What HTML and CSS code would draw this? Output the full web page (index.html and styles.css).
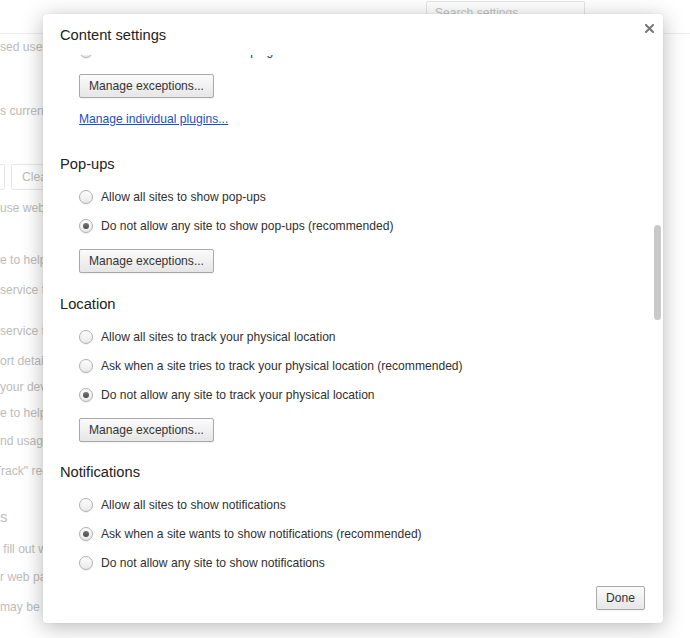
FILE: index.html
```html
<!DOCTYPE html>
<html lang="en">
<head>
    <meta charset="UTF-8">
    <meta name="viewport" content="width=device-width, initial-scale=1.0">
    <title>Content settings</title>
    <link rel="stylesheet" href="styles.css">
</head>
<body>
    <div class="backdrop">
        <div class="bg-header">
            <div class="bg-search">Search settings</div>
        </div>
        <div class="bg-line m5">sed users to manage this device</div>
        <div class="bg-line m48">s currently the default browser</div>
        <div class="bg-buttons m45">
            <span class="bg-btn first">Content settings...</span>
            <span class="bg-btn">Clear browsing data...</span>
        </div>
        <div class="bg-line m10">use web services to help</div>
        <div class="bg-line m36">e to help resolve navigation errors</div>
        <div class="bg-line m14">service to help complete searches</div>
        <div class="bg-line m25">service to help load pages</div>
        <div class="bg-line m14">ort details of possible security incidents</div>
        <div class="bg-line m10">your device from dangerous sites</div>
        <div class="bg-line m10">e to help resolve spelling errors</div>
        <div class="bg-line m12">nd usage statistics and crash reports</div>
        <div class="bg-line m14 clip">Track" request with your browsing traffic</div>
        <div class="bg-heading m28">s</div>
        <div class="bg-line m14">&nbsp;fill out web forms in a single click</div>
        <div class="bg-line m12">r web passwords</div>
        <div class="bg-line m14">may be stored here</div>
    </div>

    <div class="dialog">
        <div class="dialog-title">Content settings</div>
        <button class="close" aria-label="Close">
            <svg width="9" height="9" viewBox="0 0 9 9">
                <path d="M1 1 L8 8 M8 1 L1 8" stroke="#777" stroke-width="2" stroke-linecap="square" fill="none"/>
            </svg>
        </button>

        <div class="dialog-body">
            <div class="scroller">
                <div class="option"><span class="radio"></span>Let me choose when to run plugin content</div>
                <button class="btn indent">Manage exceptions...</button>
                <a class="link" href="#">Manage individual plugins...</a>

                <section class="group first">
                    <h3>Pop-ups</h3>
                    <div class="options">
                        <div class="option"><span class="radio"></span>Allow all sites to show pop-ups</div>
                        <div class="option"><span class="radio checked"></span>Do not allow any site to show pop-ups (recommended)</div>
                    </div>
                    <button class="btn indent">Manage exceptions...</button>
                </section>

                <section class="group">
                    <h3>Location</h3>
                    <div class="options">
                        <div class="option"><span class="radio"></span>Allow all sites to track your physical location</div>
                        <div class="option"><span class="radio"></span>Ask when a site tries to track your physical location (recommended)</div>
                        <div class="option"><span class="radio checked"></span>Do not allow any site to track your physical location</div>
                    </div>
                    <button class="btn indent">Manage exceptions...</button>
                </section>

                <section class="group">
                    <h3>Notifications</h3>
                    <div class="options">
                        <div class="option"><span class="radio"></span>Allow all sites to show notifications</div>
                        <div class="option"><span class="radio checked"></span>Ask when a site wants to show notifications (recommended)</div>
                        <div class="option"><span class="radio"></span>Do not allow any site to show notifications</div>
                    </div>
                    <button class="btn indent">Manage exceptions...</button>
                </section>
            </div>
            <div class="scrollbar"></div>
        </div>

        <div class="dialog-footer">
            <button class="btn">Done</button>
        </div>
    </div>
</body>
</html>
```

FILE: styles.css
```css
html, body {
    margin: 0;
    padding: 0;
    height: 100%;
}
body {
    font-family: "Liberation Sans", Arial, sans-serif;
    font-size: 12.1px;
    color: #303030;
    background-color: #fff;
    overflow: hidden;
    position: relative;
}

/* faded settings page behind the dialog */
.backdrop {
    color: #bcbcbc;
    white-space: nowrap;
}
.bg-header {
    height: 33px;
    border-bottom: 1px solid #ececec;
    display: flex;
    justify-content: flex-end;
    padding-right: 105px;
}
.bg-search {
    box-sizing: border-box;
    width: 159px;
    height: 25px;
    margin-top: 1px;
    border: 1px solid #e4e4e4;
    border-radius: 2px;
    padding-left: 8px;
    line-height: 23px;
    color: #c4c4c4;
}
.bg-line {
    line-height: 16px;
    height: 16px;
}
.bg-line.clip {
    margin-left: -6px;
}
.bg-heading {
    font-size: 15px;
    line-height: 20px;
    height: 20px;
}
.bg-buttons {
    display: flex;
    height: 26px;
}
.bg-btn {
    box-sizing: border-box;
    height: 26px;
    line-height: 24px;
    border: 1px solid #e6e6e6;
    border-radius: 2px;
    padding: 0 10px;
    margin-left: 6px;
}
.bg-btn.first {
    margin-left: -120px;
    width: 125px;
}
.m5 { margin-top: 5px; }
.m10 { margin-top: 10px; }
.m12 { margin-top: 12px; }
.m14 { margin-top: 14px; }
.m25 { margin-top: 25px; }
.m28 { margin-top: 28px; }
.m36 { margin-top: 36px; }
.m45 { margin-top: 45px; }
.m48 { margin-top: 48px; }

/* dialog */
.dialog {
    position: absolute;
    left: 43px;
    top: 14px;
    width: 620px;
    height: 609px;
    background-color: #fff;
    border-radius: 3px;
    box-shadow: 0 4px 22px rgba(0, 0, 0, 0.28), 0 0 1px rgba(0, 0, 0, 0.2);
    display: flex;
    flex-direction: column;
}
.dialog-title {
    height: 41px;
    flex-shrink: 0;
    box-sizing: border-box;
    padding: 13px 0 0 17px;
    font-size: 14.7px;
    line-height: 17px;
    color: #222;
}
.close {
    position: absolute;
    top: 7px;
    right: 7px;
    width: 14px;
    height: 14px;
    padding: 0;
    border: 0;
    background: none;
    display: flex;
    align-items: center;
    justify-content: center;
}
.dialog-body {
    flex: 1;
    overflow: hidden;
    position: relative;
    padding-left: 17px;
}
.scroller {
    margin-top: -19px;
}
.scrollbar {
    position: absolute;
    right: 2px;
    top: 170px;
    width: 7px;
    height: 95px;
    border-radius: 4px;
    background-color: #c9c9c9;
}
.dialog-footer {
    height: 45px;
    flex-shrink: 0;
    box-sizing: border-box;
    padding: 8px 18px 0 0;
    display: flex;
    justify-content: flex-end;
    align-items: flex-start;
}

.group h3 {
    margin: 0;
    font-size: 14.7px;
    font-weight: normal;
    line-height: 20px;
    color: #222;
}
.group {
    margin-top: 20.5px;
}
.group.first {
    margin-top: 27px;
}
.options {
    margin-top: 8.5px;
}
.option {
    height: 29px;
    display: flex;
    align-items: center;
    padding-left: 19px;
}
.radio {
    box-sizing: border-box;
    width: 14px;
    height: 14px;
    border-radius: 50%;
    border: 1px solid #b0b0b0;
    background: linear-gradient(#fdfdfd, #e9e9e9);
    box-shadow: 0 1px 1px rgba(0, 0, 0, 0.06);
    margin-right: 8px;
    display: flex;
    align-items: center;
    justify-content: center;
}
.radio.checked::after {
    content: "";
    width: 6px;
    height: 6px;
    border-radius: 50%;
    background: linear-gradient(#777, #4a4a4a);
}

.btn {
    font-family: inherit;
    font-size: 12.1px;
    color: #333;
    height: 24px;
    padding: 0 9px;
    border: 1px solid #a9a9a9;
    border-radius: 2px;
    background: linear-gradient(#fbfbfb, #e6e6e6);
    box-shadow: 0 1px 0 rgba(0, 0, 0, 0.05);
}
.btn.indent {
    display: block;
    margin: 8.5px 0 0 19px;
}
.link {
    display: block;
    margin: 13.5px 0 0 19px;
    line-height: 16px;
    color: #1a4fc4;
    text-decoration: underline;
}
```
